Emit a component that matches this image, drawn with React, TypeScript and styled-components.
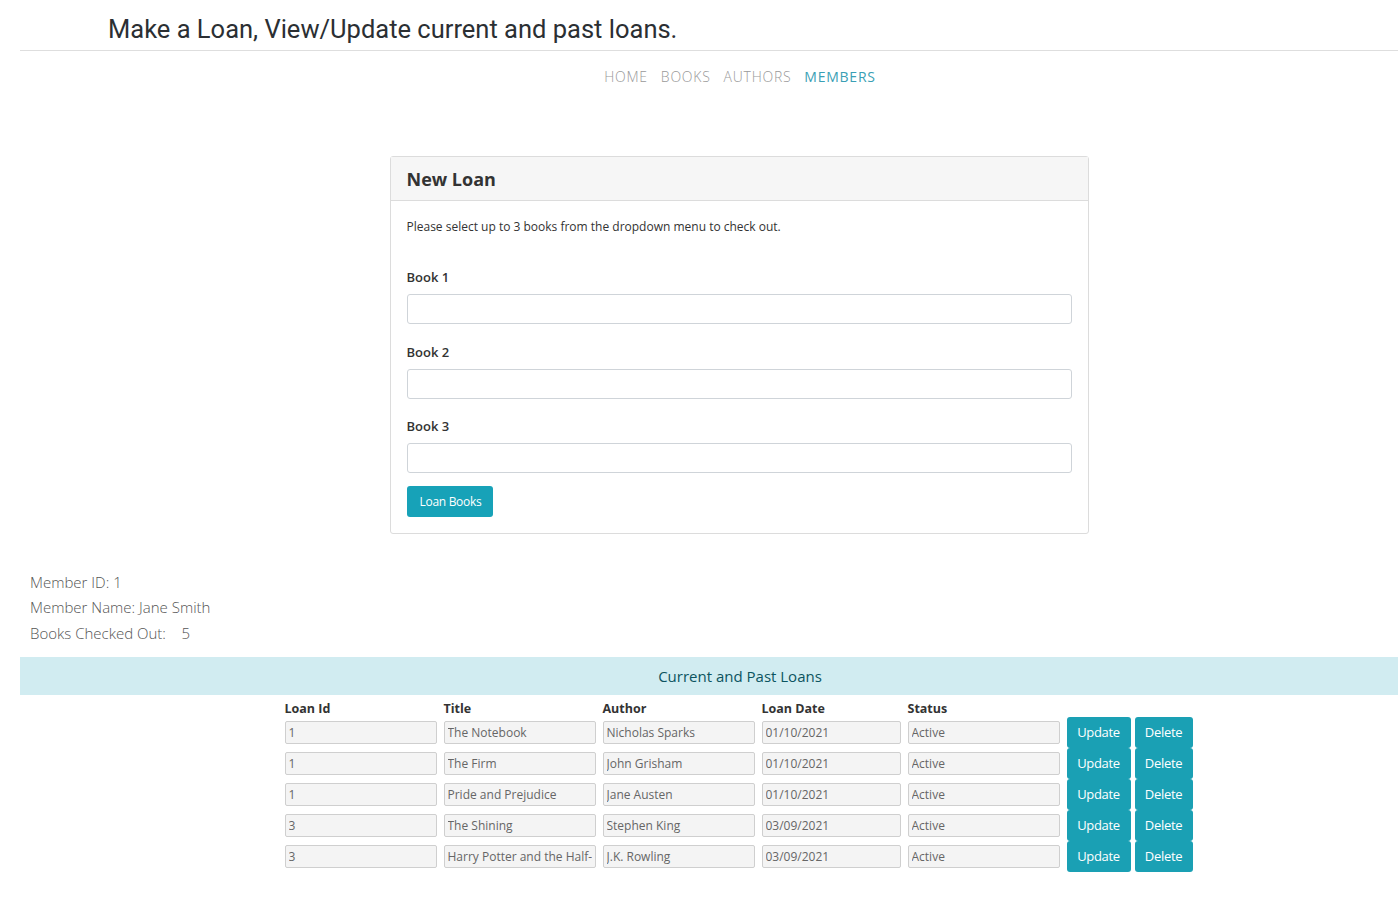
import React from 'react';
import styled, { createGlobalStyle } from 'styled-components';

const TEAL = '#17a2b8';
const TEXT = '#333';

const GlobalStyle = createGlobalStyle`
  html, body {
    margin: 0;
    padding: 0;
    background: #fff;
    overflow: hidden;
  }
  body {
    font-family: 'Open Sans', 'Noto Sans', sans-serif;
    color: ${TEXT};
  }
  * { box-sizing: border-box; }
`;

// =============================================================================
// Styled Components
// =============================================================================

const Page = styled.div`
  width: 1440px;
  margin-left: 20px;
`;

const Title = styled.h1`
  margin: 0;
  padding: 13px 0 0 88px;
  height: 51px;
  font-family: Roboto, 'Noto Sans', sans-serif;
  font-weight: 400;
  font-size: 25.5px;
  line-height: 32px;
  color: #2b2f33;
  border-bottom: 1px solid #dedede;
`;

const Nav = styled.nav`
  display: flex;
  justify-content: center;
  gap: 13px;
  padding-top: 16px;
  height: 105px;
`;

const NavLink = styled.a<{ $active?: boolean }>`
  font-size: 14px;
  font-weight: ${(p) => (p.$active ? 400 : 300)};
  line-height: 20px;
  letter-spacing: 0.75px;
  color: ${(p) => (p.$active ? '#3a9fb5' : '#999')};
  text-decoration: none;
`;

const Card = styled.section`
  width: 699px;
  margin: 0 auto;
  position: relative;
  left: -1px;
  border: 1px solid #dcdcdc;
  border-radius: 3px;
  background: #fff;
`;

const CardHeader = styled.header`
  height: 44px;
  padding: 0 16px;
  display: flex;
  align-items: center;
  background: #f6f6f6;
  border-bottom: 1px solid #dcdcdc;
  font-size: 18px;
  font-weight: 700;
  color: #333;
`;

const CardBody = styled.div`
  padding: 17px 16px 16px;
`;

const Intro = styled.p`
  margin: 0 0 32px;
  font-size: 12px;
  line-height: 18px;
  color: #333;
`;

const Field = styled.div`
  margin-bottom: 18.5px;
`;

const Label = styled.label`
  display: block;
  font-size: 13px;
  font-weight: 600;
  line-height: 18px;
  margin-bottom: 8px;
  color: #333;
`;

const TextInput = styled.input`
  display: block;
  width: 100%;
  height: 30px;
  border: 1px solid #cfd4d9;
  border-radius: 3px;
  background: #fff;
`;

const LoanButton = styled.button`
  display: block;
  margin-top: -6px;
  height: 31px;
  padding: 0 12px 0 13px;
  border: 0;
  border-radius: 3px;
  background: ${TEAL};
  color: #fff;
  font-family: 'Open Sans', sans-serif;
  font-size: 12px;
  letter-spacing: -0.3px;
`;

const MemberInfo = styled.div`
  padding: 36px 0 0 10px;
  height: 123px;
`;

const InfoLine = styled.div`
  font-size: 15px;
  font-weight: 300;
  line-height: 25.5px;
  color: #555;
  white-space: pre;
`;

const Banner = styled.div`
  height: 38px;
  display: flex;
  align-items: center;
  justify-content: center;
  background: #d1ecf1;
  color: #0c5460;
  font-size: 15px;
`;

const LoanGrid = styled.div`
  display: grid;
  grid-template-columns: 152px 152px 152px 139px 152px 64px 58px;
  column-gap: 7px;
  justify-content: center;
  align-items: center;
`;

const HeadCell = styled.div`
  height: 22px;
  display: flex;
  align-items: flex-end;
  font-size: 12.5px;
  font-weight: 700;
  color: #333;
`;

const ReadInput = styled.input`
  width: 100%;
  height: 23px;
  padding: 0 3px;
  border: 1px solid #cfcfcf;
  border-radius: 2px;
  background: #f4f4f4;
  color: #666;
  font-family: 'Open Sans', sans-serif;
  font-size: 12px;
`;

const RowButton = styled.button<{ $shift?: number }>`
  height: 31px;
  width: 100%;
  border: 0;
  border-radius: 3px;
  background: #1aa0b4;
  color: #fff;
  font-family: 'Open Sans', sans-serif;
  font-size: 13px;
  letter-spacing: -0.3px;
  margin-left: ${(p) => p.$shift ?? 0}px;
`;

// =============================================================================
// Data
// =============================================================================

const loans = [
  { id: '1', title: 'The Notebook', author: 'Nicholas Sparks', date: '01/10/2021', status: 'Active' },
  { id: '1', title: 'The Firm', author: 'John Grisham', date: '01/10/2021', status: 'Active' },
  { id: '1', title: 'Pride and Prejudice', author: 'Jane Austen', date: '01/10/2021', status: 'Active' },
  { id: '3', title: 'The Shining', author: 'Stephen King', date: '03/09/2021', status: 'Active' },
  { id: '3', title: 'Harry Potter and the Half-Blood Prince', author: 'J.K. Rowling', date: '03/09/2021', status: 'Active' },
];

// =============================================================================
// Main Component
// =============================================================================

const App = () => (
  <>
    <GlobalStyle />
    <Page>
      <Title>Make a Loan, View/Update current and past loans.</Title>
      <Nav>
        <NavLink href="#">HOME</NavLink>
        <NavLink href="#">BOOKS</NavLink>
        <NavLink href="#">AUTHORS</NavLink>
        <NavLink href="#" $active>
          MEMBERS
        </NavLink>
      </Nav>

      <Card>
        <CardHeader>New Loan</CardHeader>
        <CardBody>
          <Intro>Please select up to 3 books from the dropdown menu to check out.</Intro>
          {['Book 1', 'Book 2', 'Book 3'].map((b) => (
            <Field key={b}>
              <Label>{b}</Label>
              <TextInput />
            </Field>
          ))}
          <LoanButton>Loan Books</LoanButton>
        </CardBody>
      </Card>

      <MemberInfo>
        <InfoLine>Member ID: 1</InfoLine>
        <InfoLine>Member Name: Jane Smith</InfoLine>
        <InfoLine>{'Books Checked Out:    5'}</InfoLine>
      </MemberInfo>

      <Banner>Current and Past Loans</Banner>

      <LoanGrid>
        <HeadCell>Loan Id</HeadCell>
        <HeadCell>Title</HeadCell>
        <HeadCell>Author</HeadCell>
        <HeadCell>Loan Date</HeadCell>
        <HeadCell>Status</HeadCell>
        <HeadCell />
        <HeadCell />
        {loans.map((l, i) => (
          <React.Fragment key={i}>
            <ReadInput readOnly value={l.id} />
            <ReadInput readOnly value={l.title} />
            <ReadInput readOnly value={l.author} />
            <ReadInput readOnly value={l.date} />
            <ReadInput readOnly value={l.status} />
            <RowButton>Update</RowButton>
            <RowButton $shift={-3}>Delete</RowButton>
          </React.Fragment>
        ))}
      </LoanGrid>
    </Page>
  </>
);

export default App;
